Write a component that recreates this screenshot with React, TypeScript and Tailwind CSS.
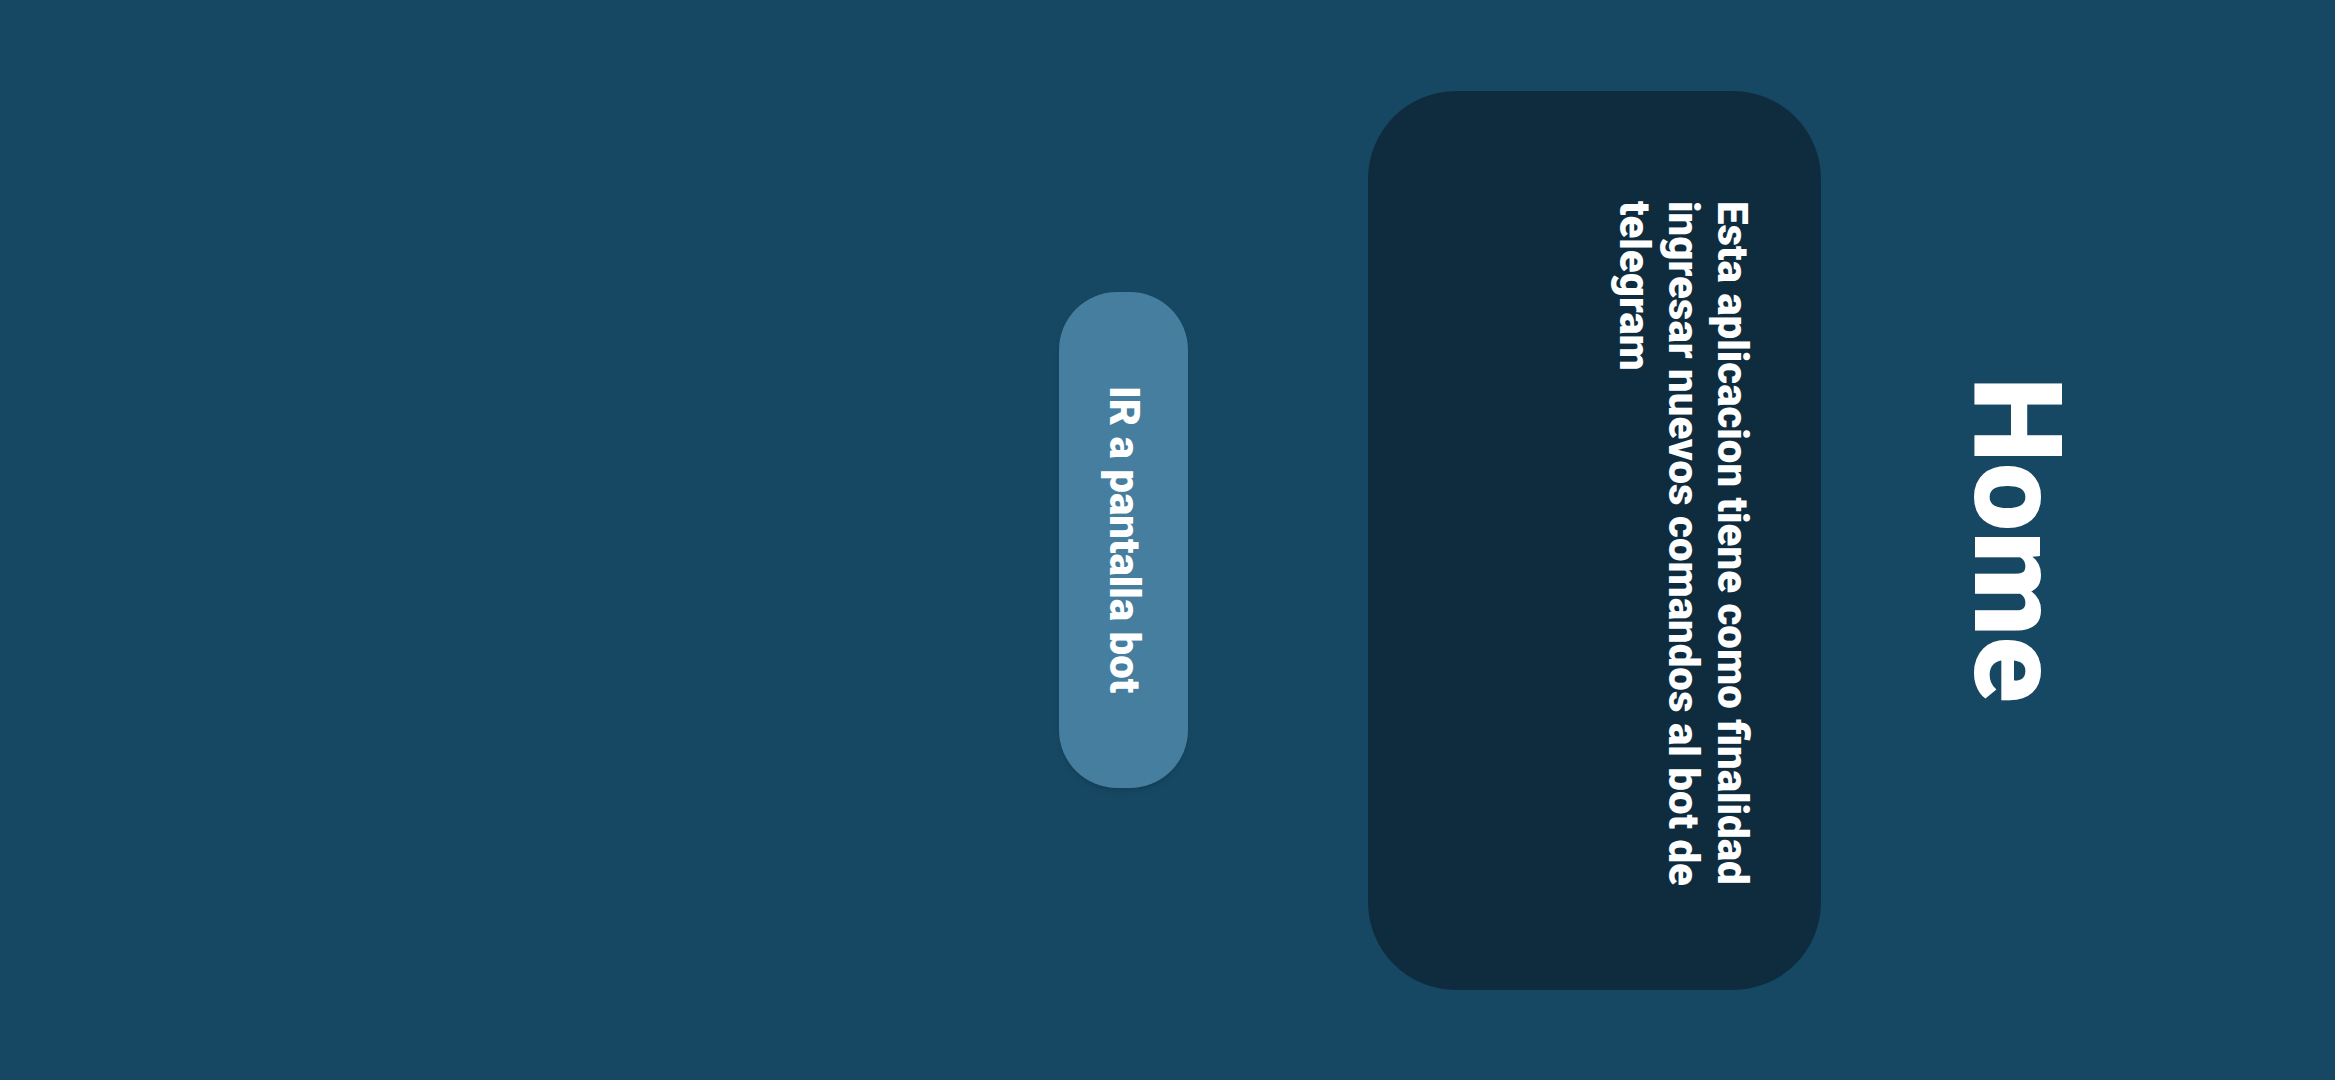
const App = () => {
  return (
    <div className="h-screen w-full overflow-hidden bg-[#174863] text-white font-['Roboto',sans-serif]">
      <div className="h-full w-full flex flex-col items-center pr-[258px] [writing-mode:vertical-rl]">
        <h1 className="text-[122px] font-black leading-none">Home</h1>

        <div className="mr-[134px] w-[453px] h-[899px] shrink-0 rounded-[88px] bg-[#0f2c3f] pt-[110px] pb-[90px] pr-[64px]">
          <p className="text-[42px] font-black leading-[49px]">
            Esta aplicacion tiene como finalidad ingresar nuevos comandos al
            bot de telegram
          </p>
        </div>

        <button className="mr-[180px] w-[129px] h-[496px] shrink-0 rounded-[58px] bg-[#457e9e] shadow-md flex items-center justify-center text-[42px] font-black leading-none">
          IR a pantalla bot
        </button>
      </div>
    </div>
  );
};

export default App;
